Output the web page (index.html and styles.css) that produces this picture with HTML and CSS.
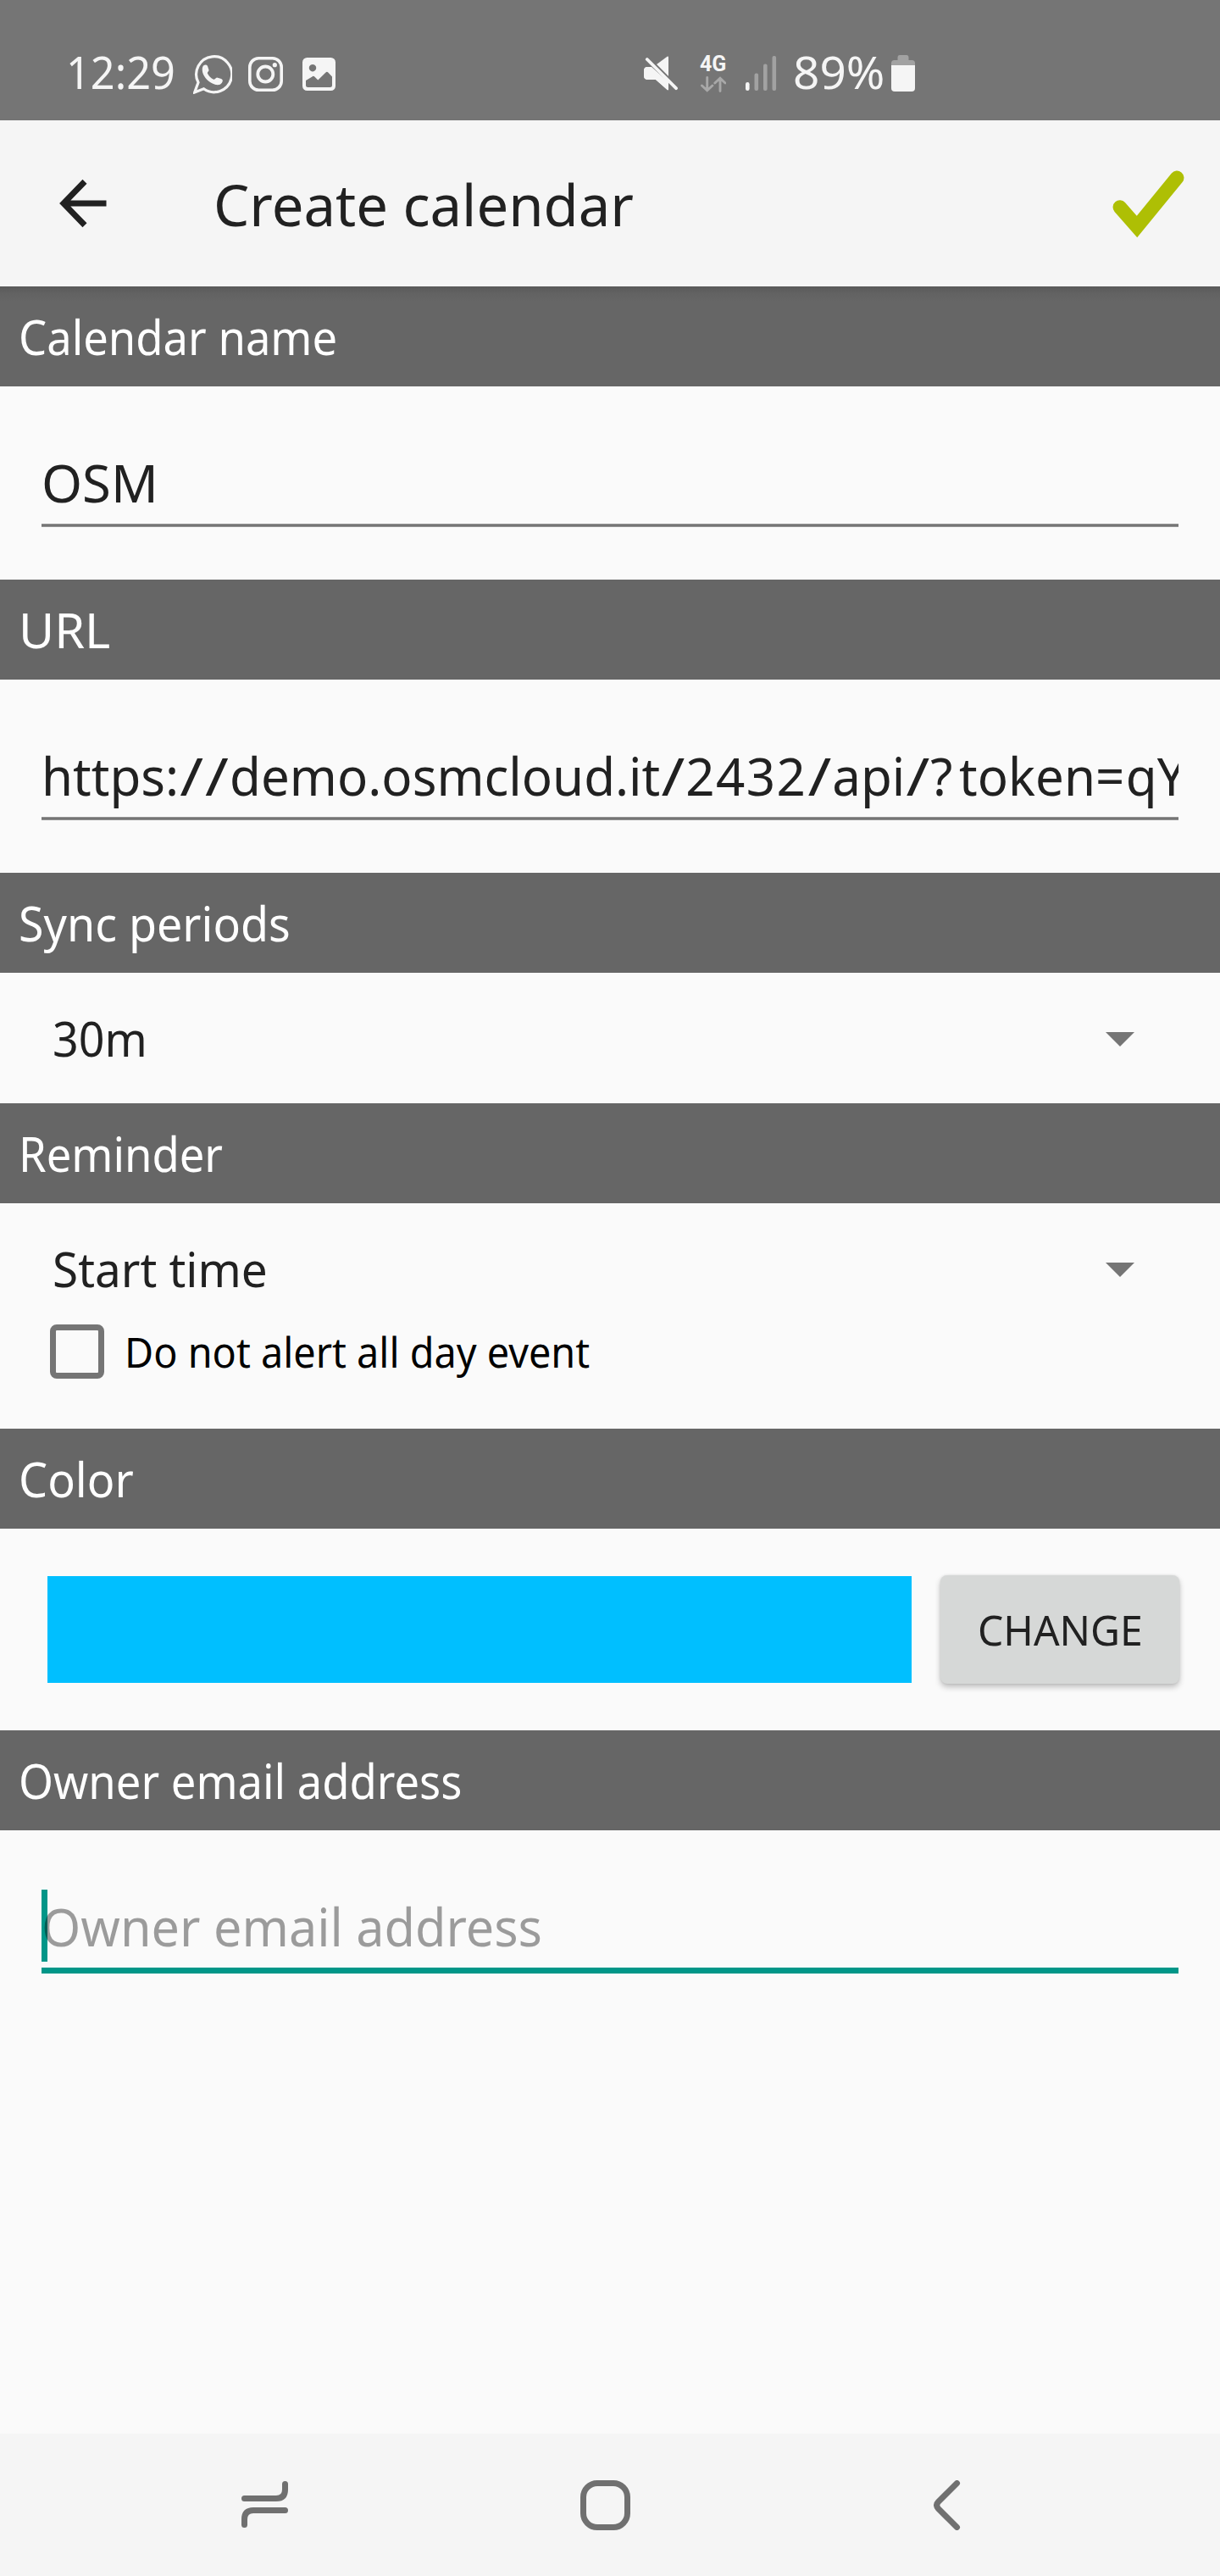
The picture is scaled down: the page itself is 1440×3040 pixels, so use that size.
FILE: index.html
```
<!DOCTYPE html>
<html lang="en">
<head>
<meta charset="utf-8">
<title>Create calendar</title>
<link rel="stylesheet" href="styles.css">
</head>
<body>
<div class="screen">
  <header class="status">
    <span class="status-text clock">12:29</span>
    <svg class="ico-whatsapp" width="46" height="46" viewBox="0 0 46 46">
      <path d="M1.700 44 6 32.300A21 21 0 1 1 12.500 39.800Z" fill="none" stroke="#f5f5f5" stroke-width="3.200"/>
      <path d="M12 12.500c2-1.500 4-1.500 5 .5l1.500 4.500c.3 1.500-1.800 2.500-1.600 4 1.300 3 4.200 5.800 7.200 7.200 1.500.3 2.600-2 4-2.200l5 1.600c2.200.9 2 2.600.8 4.600-1.500 2.500-5 3-8 2-7-2-13-8-14.800-14.500-.6-3-.5-6 .9-7.700z" fill="#f5f5f5"/>
    </svg>
    <svg class="ico-instagram" width="41" height="41" viewBox="0 0 41 41" fill="none" stroke="#f5f5f5">
      <rect x="1.800" y="1.800" width="37.400" height="37.400" rx="10.500" stroke-width="3.600"/>
      <circle cx="20.300" cy="20.500" r="9" stroke-width="3.800"/>
      <circle cx="31.300" cy="9.700" r="2.600" fill="#f5f5f5" stroke="none"/>
    </svg>
    <svg class="ico-image" width="39" height="39" viewBox="0 0 39 39">
      <path fill="#f5f5f5" fill-rule="evenodd" d="M5.500 0h28A5.500 5.500 0 0 1 39 5.500v28a5.500 5.500 0 0 1-5.500 5.500h-28A5.500 5.500 0 0 1 0 33.500v-28A5.500 5.500 0 0 1 5.500 0ZM12 8a4.200 4.200 0 1 0 .01 0ZM4 27v5.500a2.500 2.500 0 0 0 2.500 2.500h26a2.500 2.500 0 0 0 2.500-2.500V22.500L30.300 17.400a2 2 0 0 0-2.800 0L18.300 26.500 14.300 22.500a2 2 0 0 0-2.800 0Z"/>
    </svg>
    <svg class="ico-mute" width="41" height="42" viewBox="0 0 41 42" fill="#f5f5f5">
      <path d="M17 8.500 27.500.7q1.500-.8 1.500 1V24L15 10Z"/>
      <path d="M4.500 13H9l20 17.800V39q0 2-1.700.7L14 28H4.500Q0 28 0 23.500v-6Q0 13 4.500 13Z"/>
      <path d="M3.800 4 38 38.500" stroke="#757575" stroke-width="7"/>
      <path d="M4.500 13H9l20 17.800V39q0 2-1.700.7L14 28H4.500Q0 28 0 23.500v-6Q0 13 4.500 13Z"/>
      <path d="M3.800 4 38 38.200" stroke="#f5f5f5" stroke-width="3.800" stroke-linecap="round"/>
    </svg>
    <div class="network">
      <span class="network-label">4G</span>
      <svg width="30" height="19" viewBox="0 0 30 19" fill="none" stroke="#a8a8a8" stroke-width="2.900" stroke-linecap="round">
        <path d="M7.700 1.500V16M1.500 11l6.200 5.800L13.900 11M23 17.500V2.500M16.800 8 23 2.200 29 8"/>
      </svg>
    </div>
    <svg class="ico-signal" width="37" height="41" viewBox="0 0 37 41" fill="#a2a2a2">
      <rect x="0" y="31" width="4.600" height="10" rx="2.300" fill="#f5f5f5"/>
      <rect x="10.500" y="20.500" width="4.600" height="20.500" rx="2"/>
      <rect x="21" y="9.500" width="4.600" height="31.500" rx="2"/>
      <rect x="31.500" y="0" width="4.600" height="41" rx="2"/>
    </svg>
    <span class="status-text battery-text">89%</span>
    <svg class="ico-battery" width="28" height="43" viewBox="0 0 28 43">
      <path fill="#a2a2a2" d="M0 12V9.500Q0 6 3.500 6H7.500V3Q7.500 0 10 0h8q2.500 0 2.500 3V6h4Q28 6 28 9.500V12Z"/>
      <path fill="#f5f5f5" d="M0 12h28v27q0 4-4 4H4q-4 0-4-4Z"/>
    </svg>
  </header>

  <div class="appbar">
    <svg class="ico-back" width="56" height="58" viewBox="0 0 56 58" fill="none" stroke="#212121" stroke-width="7">
      <path d="M30 3.200 5 29 30 54.800M6 29H55.500"/>
    </svg>
    <h1 class="title">Create calendar</h1>
    <svg class="ico-check" width="86" height="80" viewBox="0 0 86 80" fill="none" stroke="#aebf04" stroke-width="16.500" stroke-linecap="round">
      <path d="M8.800 43.500 29 66.500 76.200 8.800"/>
    </svg>
  </div>

  <main class="form">
    <h2 class="section first"><span class="t-name">Calendar name</span></h2>
    <div class="field"><div class="input"><span class="v-osm">OSM</span></div></div>

    <h2 class="section"><span class="t-url">URL</span></h2>
    <div class="field"><div class="input"><span class="v-url">https:<span class="slash">/</span><span class="slash">/</span>demo.osmcloud.it<span class="slash">/</span><span class="digits">2432</span><span class="slash">/</span>api<span class="slash">/</span><span class="query">?</span>token<span class="digits">=</span>qY</span></div></div>

    <h2 class="section"><span class="t-sync">Sync periods</span></h2>
    <div class="spinner"><span class="v-period">30m</span><i class="caret"></i></div>

    <h2 class="section"><span class="t-reminder">Reminder</span></h2>
    <div class="reminder">
      <div class="spinner"><span class="v-start">Start time</span><i class="caret"></i></div>
      <label class="check"><i class="box"></i><span class="check-label">Do not alert all day event</span></label>
    </div>

    <h2 class="section"><span class="t-color">Color</span></h2>
    <div class="color"><div class="swatch"></div><button class="change" type="button"><span>CHANGE</span></button></div>

    <h2 class="section"><span class="t-owner">Owner email address</span></h2>
    <div class="field owner"><div class="input focused"><i class="cursor"></i><span class="hint">Owner email address</span></div></div>
  </main>

  <nav class="navbar">
    <svg class="nav-recents" width="56" height="56" viewBox="0 0 56 56" fill="none" stroke="#707070" stroke-width="7" stroke-linecap="round">
      <path d="M3.500 20.500H41Q51.500 20.500 51.500 10V3.500M51.500 34.500H14Q3.500 34.500 3.500 45V51.500"/>
    </svg>
    <svg class="nav-home" width="59" height="59" viewBox="0 0 59 59" fill="none" stroke="#707070" stroke-width="7">
      <rect x="3.500" y="3.500" width="52" height="52" rx="16.500"/>
    </svg>
    <svg class="nav-back" width="32" height="59" viewBox="0 0 32 59" fill="none" stroke="#707070" stroke-width="7" stroke-linecap="round">
      <path d="M27.500 3.500 5.500 25.500Q1.800 29.500 5.500 33.500L27.500 55.500"/>
    </svg>
  </nav>
</div>
</body>
</html>
```
FILE: styles.css
```
* { box-sizing: border-box; }
body {
  margin: 0;
  background: #fafafa;
  font-family: "Noto Sans", "Open Sans", sans-serif;
  color: #212121;
}
svg { display: block; flex: none; }
.screen {
  width: 1440px;
  height: 3040px;
  display: flex;
  flex-direction: column;
  overflow: hidden;
}

/* Status bar */
.status {
  height: 142px;
  display: flex;
  align-items: flex-start;
  background: #757575;
  color: #f5f5f5;
}
.status-text {
  flex: none;
  font-size: 52px;
  line-height: 60px;
  margin-top: 55px;
  white-space: nowrap;
}
.clock {
  width: 150px;
  margin-left: 78px;
  transform: scaleX(.97);
  transform-origin: left;
}
.ico-whatsapp { margin-top: 65px; }
.ico-instagram { margin: 67px 0 0 19px; }
.ico-image { margin: 68px 0 0 23px; }
.ico-mute { margin: 66px 0 0 364px; }
.network { width: 33px; margin: 62px 0 0 25px; flex: none; }
.network svg { margin-left: 1px; }
.network-label {
  display: block;
  font: bold 25px/28px Roboto, sans-serif;
  white-space: nowrap;
}
.ico-signal { margin: 66px 0 0 21px; }
.battery-text {
  width: 116px;
  margin-left: 19px;
  transform: scaleX(1.055);
  transform-origin: left;
}
.ico-battery { margin: 65px 0 0 0; }

/* App bar */
.appbar {
  height: 196px;
  display: flex;
  align-items: center;
  padding: 0 41px 0 70px;
  background: #f5f5f5;
}
.ico-back { margin-bottom: 1px; }
.title {
  flex: 1;
  margin: 0 0 0 126px;
  padding-top: 2px;
  font-size: 68px;
  font-weight: 400;
  line-height: 196px;
  white-space: nowrap;
  transform: scaleX(.985);
  transform-origin: left;
}
.ico-check { margin-top: 2px; }

/* Section headings */
.section {
  height: 118px;
  margin: 0;
  padding-left: 21.5px;
  background: #666;
  color: #fff;
  font-size: 56px;
  font-weight: 400;
  line-height: 119px;
  white-space: nowrap;
}
.section.first {
  background: linear-gradient(#595959, #626262 8px, #666 18px);
}
.section span, .v-osm, .v-url, .hint, .spinner span, .check-label, .change span {
  display: inline-block;
  transform-origin: left;
}
.section span { transform: scaleX(.938); }
.section .t-url { transform: scaleX(1.03); }
.section .t-sync { transform: scaleX(.96); }
.section .t-color { transform: scaleX(.965); }

/* Text fields */
.field { height: 228px; padding: 62px 49px 0; }
.form { flex: 1; }
.input {
  position: relative;
  height: 104px;
  font-size: 62.5px;
  line-height: 101px;
  white-space: nowrap;
  overflow: hidden;
  background: linear-gradient(#939393 1px, #757575 1px 3px, #939393 3px) bottom / 100% 4px no-repeat;
}
.v-osm { transform: scaleX(.985); }
.v-url { transform: scaleX(.96); }
.slash {
  display: inline-block;
  margin: 0 4px;
  transform: scaleX(1.25);
}
.query { letter-spacing: 8px; }
.digits { letter-spacing: 1.5px; }
.input.focused {
  height: 107px;
  background: linear-gradient(#009688, #009688) bottom / 100% 7px no-repeat;
}
.cursor {
  position: absolute;
  left: 0;
  top: 8px;
  width: 7px;
  height: 85px;
  background: #009688;
}
.hint {
  position: relative;
  color: rgba(0, 0, 0, .38);
  transform: scaleX(.949);
}

/* Spinners */
.spinner {
  height: 154px;
  display: flex;
  align-items: center;
  justify-content: space-between;
  padding: 0 101px 0 62px;
  font-size: 56px;
  line-height: 154px;
}
.caret {
  width: 34px;
  height: 17px;
  margin-top: 3px;
  background: #757575;
  clip-path: polygon(0 0, 100% 0, 50% 100%);
}
.v-period { transform: scaleX(.96); }
.v-start { transform: scaleX(.98); }

/* Reminder option */
.reminder { height: 266px; }
.check {
  height: 42px;
  display: flex;
  align-items: center;
  padding-left: 59px;
  color: #000;
}
.box {
  width: 64px;
  height: 64px;
  flex: none;
  border: 7px solid #757575;
  border-radius: 8px;
}
.check-label {
  margin-left: 24px;
  font-size: 48.5px;
  line-height: 60px;
  white-space: nowrap;
  transform: scaleX(.965);
}

/* Color row */
.color {
  height: 238px;
  display: grid;
  grid-template-columns: 1020px 282px;
  column-gap: 34px;
  align-content: start;
  align-items: center;
  padding: 55px 0 0 56px;
}
.swatch { height: 126px; background: #00bfff; }
.change {
  height: 128px;
  padding: 0;
  border: 0;
  border-radius: 8px;
  background: #d6d8d7;
  color: #212121;
  font: 400 49px/128px "Noto Sans", sans-serif;
  box-shadow: 0 4px 7px rgba(0, 0, 0, .24), 0 0 3px rgba(0, 0, 0, .1);
}
.change span { transform: scaleX(.98); transform-origin: center; }

/* Navigation bar */
.navbar {
  height: 168px;
  display: flex;
  align-items: center;
  padding-left: 285px;
  background: #f5f5f5;
}
.nav-home { margin-left: 344px; }
.nav-back { margin-left: 358px; }
```
